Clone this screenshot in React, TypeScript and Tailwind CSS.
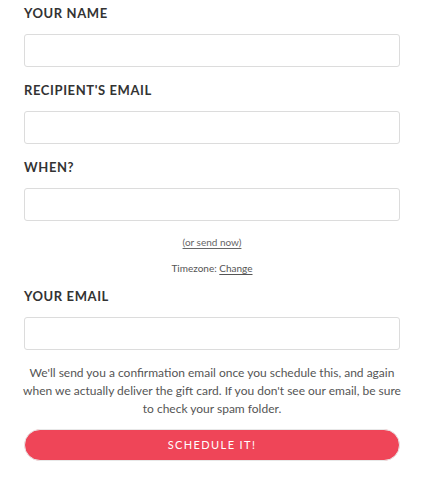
import React from 'react'

function Field({ label, type = 'text' }: { label: string; type?: string }) {
  return (
    <div>
      <label className="block h-5 text-[13px] leading-5 font-bold tracking-[0.6px] text-[#333333] uppercase">
        {label}
      </label>
      <input
        type={type}
        className="mt-[11px] block h-[33px] w-full rounded-[3px] border border-[#dcdcdc] bg-white px-3 text-[13px] outline-none"
      />
    </div>
  )
}

export default function App() {
  return (
    <div className="min-h-screen bg-white font-['Lato','Liberation_Sans',sans-serif]">
      <form className="pl-6 pr-7 pt-[3px]" onSubmit={(e) => e.preventDefault()}>
        <Field label="Your name" />
        <div className="mt-[13px]">
          <Field label="Recipient's email" type="email" />
        </div>
        <div className="mt-[13px]">
          <Field label="When?" />
        </div>

        <p className="mt-[14px] text-center text-[10px] leading-[14px] text-[#666666]">
          <a href="#" className="underline underline-offset-2">(or send now)</a>
        </p>
        <p className="mt-[12px] text-center text-[10px] leading-[14px] text-[#555555]">
          Timezone: <a href="#" className="underline underline-offset-2">Change</a>
        </p>

        <div className="mt-[11px]">
          <Field label="Your email" type="email" />
        </div>

        <p className="mt-[14px] -mx-2 text-center text-[12px] leading-[18px] text-[#555555]">
          We'll send you a confirmation email once you schedule this, and again
          <br />
          when we actually deliver the gift card. If you don't see our email, be sure
          <br />
          to check your spam folder.
        </p>

        <button
          type="submit"
          className="mt-[11px] block h-8 w-full rounded-full border border-[#e8e8e8] bg-[#ef4558] text-[11px] tracking-[1.4px] text-white uppercase"
        >
          Schedule it!
        </button>
      </form>
    </div>
  )
}
